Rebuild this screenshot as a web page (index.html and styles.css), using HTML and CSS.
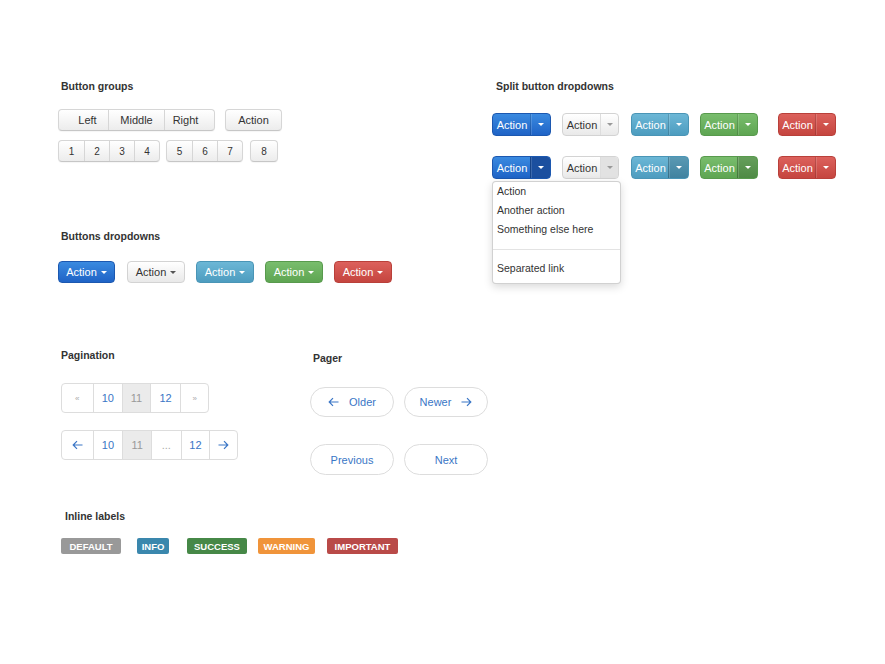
FILE: index.html
```html
<!DOCTYPE html>
<html>
<head>
<meta charset="utf-8">
<link rel="stylesheet" href="styles.css">
</head>
<body>
<div class="page">
  <div class="top">
    <div class="col-left">
      <div class="title">Button groups</div>
      <div class="row row-groups">
        <div class="btn-group">
          <span class="btn w-left">Left</span><span class="btn w-middle">Middle</span><span class="btn w-right">Right</span>
        </div>
        <div class="btn-group g-action">
          <span class="btn w-action">Action</span>
        </div>
      </div>
      <div class="row row-nums">
        <div class="btn-group">
          <span class="btn num">1</span><span class="btn num">2</span><span class="btn num">3</span><span class="btn num">4</span>
        </div>
        <div class="btn-group g-567">
          <span class="btn num">5</span><span class="btn num">6</span><span class="btn num">7</span>
        </div>
        <div class="btn-group g-8">
          <span class="btn num n8">8</span>
        </div>
      </div>

      <div class="title t-dd">Buttons dropdowns</div>
      <div class="row row-dd">
        <span class="btn dd primary">Action <i class="caret"></i></span>
        <span class="btn dd default">Action <i class="caret dark"></i></span>
        <span class="btn dd info">Action <i class="caret"></i></span>
        <span class="btn dd success">Action <i class="caret"></i></span>
        <span class="btn dd danger">Action <i class="caret"></i></span>
      </div>
    </div>

    <div class="col-right">
      <div class="title t-split">Split button dropdowns</div>
      <div class="split-row sr1">
        <div class="split primary"><span class="main">Action</span><span class="tog"><i class="caret"></i></span></div>
        <div class="split default"><span class="main">Action</span><span class="tog"><i class="caret grey"></i></span></div>
        <div class="split info"><span class="main">Action</span><span class="tog"><i class="caret"></i></span></div>
        <div class="split success"><span class="main">Action</span><span class="tog"><i class="caret"></i></span></div>
        <div class="split danger s-last"><span class="main">Action</span><span class="tog"><i class="caret"></i></span></div>
      </div>
      <div class="split-row sr2">
        <div class="split primary open"><span class="main">Action</span><span class="tog"><i class="caret"></i></span>
          <ul class="menu">
            <li>Action</li>
            <li>Another action</li>
            <li>Something else here</li>
            <li class="divider"></li>
            <li>Separated link</li>
          </ul>
        </div>
        <div class="split default open"><span class="main">Action</span><span class="tog"><i class="caret grey"></i></span></div>
        <div class="split info open"><span class="main">Action</span><span class="tog"><i class="caret"></i></span></div>
        <div class="split success open"><span class="main">Action</span><span class="tog"><i class="caret"></i></span></div>
        <div class="split danger s-last"><span class="main">Action</span><span class="tog"><i class="caret"></i></span></div>
      </div>
    </div>
  </div>

  <div class="mid">
    <div class="col-pag">
      <div class="title">Pagination</div>
      <div class="pagination p1">
        <span class="pg w31 muted small">&laquo;</span><span class="pg w30">10</span><span class="pg w28 active">11</span><span class="pg w31">12</span><span class="pg w28 muted small">&raquo;</span>
      </div>
      <div class="pagination p2">
        <span class="pg w31"><svg width="11" height="10" viewBox="0 0 11 10"><path d="M10.5 5H1.2M5 1.2L1.2 5L5 8.8" fill="none" stroke="currentColor" stroke-width="1.2"/></svg></span><span class="pg w30">10</span><span class="pg w29 active">11</span><span class="pg w30 muted">...</span><span class="pg w29">12</span><span class="pg w28"><svg width="11" height="10" viewBox="0 0 11 10"><path d="M0.5 5H9.8M6 1.2L9.8 5L6 8.8" fill="none" stroke="currentColor" stroke-width="1.2"/></svg></span>
      </div>
    </div>
    <div class="col-pager">
      <div class="title t-pager">Pager</div>
      <div class="pager pr1">
        <span class="pill"><svg width="11" height="10" viewBox="0 0 11 10"><path d="M10.5 5H1.2M5 1.2L1.2 5L5 8.8" fill="none" stroke="currentColor" stroke-width="1.2"/></svg><span class="pt">Older</span></span>
        <span class="pill"><span class="pt">Newer</span><svg width="11" height="10" viewBox="0 0 11 10"><path d="M0.5 5H9.8M6 1.2L9.8 5L6 8.8" fill="none" stroke="currentColor" stroke-width="1.2"/></svg></span>
      </div>
      <div class="pager pr2">
        <span class="pill">Previous</span>
        <span class="pill">Next</span>
      </div>
    </div>
  </div>

  <div class="bottom">
    <div class="title t-labels">Inline labels</div>
    <div class="labels">
      <span class="label l-default">DEFAULT</span>
      <span class="label l-info">INFO</span>
      <span class="label l-success">SUCCESS</span>
      <span class="label l-warning">WARNING</span>
      <span class="label l-important">IMPORTANT</span>
    </div>
  </div>
</div>
</body>
</html>
```
FILE: styles.css
```css
* { box-sizing: border-box; }
body {
  margin: 0;
  background: #fff;
  color: #333;
  font-family: "Liberation Sans", Arial, Helvetica, sans-serif;
  font-size: 11px;
}
.page { padding-top: 79px; }

.title {
  font-weight: bold;
  font-size: 10.5px;
  line-height: 14px;
  height: 14px;
  color: #333;
}

/* ---------- top ---------- */
.top { display: flex; }
.col-left { margin-left: 58px; width: 434px; }
.col-left > .title:first-child { padding-left: 3px; }
.col-right { width: 360px; }

.row { display: flex; }
.row-groups { margin-top: 16px; height: 22px; }
.row-nums { margin-top: 9px; height: 22px; }

.btn-group {
  display: flex;
  border: 1px solid #d6d6d6;
  border-bottom-color: #c6c6c6;
  border-radius: 4px;
  overflow: hidden;
  background: linear-gradient(#ffffff, #ececec);
  box-shadow: 0 1px 1px rgba(0,0,0,0.04);
}
.btn-group .btn {
  display: flex;
  align-items: center;
  justify-content: center;
  height: 100%;
  color: #333;
  border-left: 1px solid #d6d6d6;
}
.btn-group .btn:first-child { border-left: 0; }
.w-left { width: 49px; padding-left: 8px; }
.w-middle { width: 56px; }
.w-right { width: 50px; padding-right: 8px; }
.g-action { margin-left: 10px; }
.w-action { width: 55px; }
.num { width: 25px; font-size: 10px; }
.g-567 { margin-left: 6px; }
.g-8 { margin-left: 7px; }
.n8 { width: 26px; }

.t-dd { margin-top: 67px; padding-left: 3px; }
.row-dd { margin-top: 18px; height: 22px; }
.dd {
  display: flex;
  align-items: center;
  justify-content: center;
  gap: 4px;
  width: 58px;
  height: 22px;
  margin-right: 11px;
  border-radius: 4px;
  color: #fff;
}
.dd:first-child { width: 57px; margin-right: 12px; }

.primary { background: linear-gradient(#3a8ae0, #1f63c6); border: 1px solid #1c58b0; }
.default { background: linear-gradient(#ffffff, #e9e9e9); border: 1px solid #d3d3d3; color: #333 !important; }
.info { background: linear-gradient(#6cb7d6, #4d9cbf); border: 1px solid #4a95b6; }
.success { background: linear-gradient(#79bd6d, #5ea552); border: 1px solid #589a4d; }
.danger { background: linear-gradient(#dc615c, #c5453f); border: 1px solid #b9403a; }

.caret {
  display: inline-block;
  width: 0; height: 0;
  border-left: 3px solid transparent;
  border-right: 3px solid transparent;
  border-top: 3px solid #fff;
}
.caret.dark { border-top-color: #555; }
.caret.grey { border-top-color: #999; }

.t-split { padding-left: 4px; }
.split-row { display: flex; height: 23px; }
.sr1 { margin-top: 20px; }
.sr2 { margin-top: 20px; }
.split {
  position: relative;
  display: flex;
  width: 58px;
  height: 23px;
  margin-right: 11px;
  border-radius: 4px;
  color: #fff;
}
.split.primary { width: 59px; }
.split.default { width: 57px; margin-right: 12px; }
.split.s-last { margin-left: 9px; }
.split .main {
  flex: 1;
  display: flex;
  align-items: center;
  justify-content: center;
  padding-left: 1px;
}
.split .tog {
  width: 20px;
  display: flex;
  align-items: center;
  justify-content: center;
  border-left: 1px solid rgba(0,0,0,0.15);
  box-shadow: inset 1px 0 0 rgba(255,255,255,0.15);
}
.split.default .tog { border-left-color: #ddd; box-shadow: none; width: 18px; }
.split.open .tog { background: rgba(0,0,0,0.16); border-radius: 0 3px 3px 0; }
.split.primary.open .tog { background: #1b4f9f; }
.split.default.open .tog { background: #e2e2e2; }

.menu {
  position: absolute;
  top: 24px;
  left: -1px;
  width: 129px;
  margin: 0;
  padding: 0 0 5px;
  list-style: none;
  background: #fff;
  border: 1px solid rgba(0,0,0,0.18);
  border-radius: 4px;
  box-shadow: 0 3px 8px rgba(0,0,0,0.15);
  z-index: 5;
}
.menu li {
  padding-left: 4px;
  height: 19px;
  line-height: 19px;
  color: #333;
  font-size: 10.5px;
}
.menu li.divider {
  height: 1px;
  margin: 10px 0 9px;
  background: #e3e3e3;
  padding: 0;
}

/* ---------- middle ---------- */
.mid { display: flex; margin-top: 65px; }
.col-pag { margin-left: 61px; width: 249px; }
.pagination {
  display: inline-flex;
  height: 30px;
  border: 1px solid #ddd;
  border-radius: 4px;
  overflow: hidden;
}
.p1 { margin-top: 21px; display: flex; width: 148px; }
.p2 { margin-top: 17px; display: flex; width: 177px; }
.pg {
  display: flex;
  align-items: center;
  justify-content: center;
  height: 100%;
  color: #3a76c6;
  border-left: 1px solid #ddd;
  font-size: 11px;
}
.pg:first-child { border-left: 0; }
.pg.active { background: #ebebeb; color: #999; }
.pg.muted { color: #aaa; }
.pg.small { font-size: 8px; }
.w28 { width: 28px; } .w29 { width: 29px; } .w30 { width: 30px; } .w31 { width: 31px; }
.pg svg { display: block; }

.t-pager { margin-top: 3px; padding-left: 3px; }
.pager { display: flex; gap: 10px; }
.pr1 { margin-top: 22px; height: 30px; }
.pr2 { margin-top: 27px; height: 31px; }
.pill {
  display: flex;
  align-items: center;
  justify-content: center;
  width: 84px;
  height: 100%;
  border: 1px solid #ddd;
  border-radius: 16px;
  color: #3a76c6;
  font-size: 11px;
  gap: 10px;
}
.pill svg { display: block; }

/* ---------- bottom ---------- */
.bottom { margin-top: 34px; margin-left: 61px; }
.t-labels { padding-left: 4px; }
.labels { display: flex; margin-top: 15px; height: 16px; }
.label {
  display: flex;
  align-items: center;
  justify-content: center;
  height: 16px;
  border-radius: 2px;
  color: #fff;
  font-weight: bold;
  font-size: 9.5px;
}
.l-default { width: 60px; background: #999; margin-right: 16px; }
.l-info { width: 32px; background: #3a87ad; margin-right: 18px; }
.l-success { width: 60px; background: #468847; margin-right: 11px; }
.l-warning { width: 57px; background: #f0943a; margin-right: 12px; }
.l-important { width: 71px; background: #b94a48; }
```
